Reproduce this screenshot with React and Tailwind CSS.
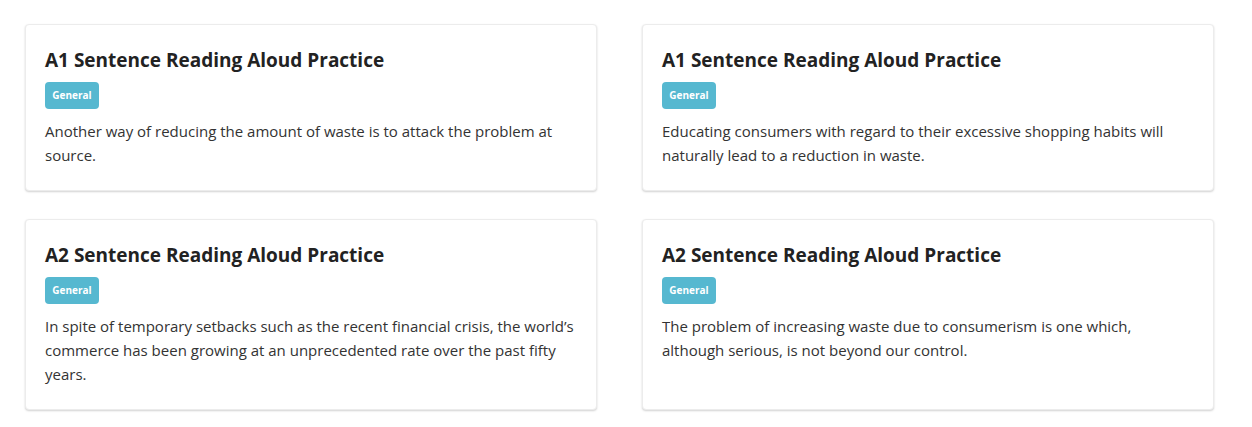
import React from "react";

const practices = [
  {
    title: "A1 Sentence Reading Aloud Practice",
    tag: "General",
    text: "Another way of reducing the amount of waste is to attack the problem at source.",
  },
  {
    title: "A1 Sentence Reading Aloud Practice",
    tag: "General",
    text: "Educating consumers with regard to their excessive shopping habits will naturally lead to a reduction in waste.",
  },
  {
    title: "A2 Sentence Reading Aloud Practice",
    tag: "General",
    text: "In spite of temporary setbacks such as the recent financial crisis, the world\u2019s commerce has been growing at an unprecedented rate over the past fifty years.",
  },
  {
    title: "A2 Sentence Reading Aloud Practice",
    tag: "General",
    text: "The problem of increasing waste due to consumerism is one which, although serious, is not beyond our control.",
  },
];

const PracticeCard = ({ item }) => (
  <div className="bg-white border border-[#ececec] rounded-[4px] shadow-[0_1px_2px_rgba(0,0,0,0.18)] px-[19px] pt-[23px] pb-[23px]">
    <h3 className="text-[19px] leading-[24px] font-bold text-[#222]">
      {item.title}
    </h3>
    <span className="inline-flex items-center justify-center mt-[10px] w-[54px] h-[27px] rounded-[4px] bg-[#56b8d0] text-white text-[10px] font-bold">
      {item.tag}
    </span>
    <p className="mt-[10px] text-[15px] leading-[24px] text-[#333]">
      {item.text}
    </p>
  </div>
);

const App = () => {
  return (
    <div
      className="min-h-screen bg-white pl-[25px] pr-[38px] pt-[24px]"
      style={{ fontFamily: '"Open Sans", "Noto Sans", sans-serif' }}
    >
      <div className="grid grid-cols-2 gap-x-[45px] gap-y-[28px]">
        {practices.map((item, i) => (
          <PracticeCard key={i} item={item} />
        ))}
      </div>
    </div>
  );
};

export default App;
